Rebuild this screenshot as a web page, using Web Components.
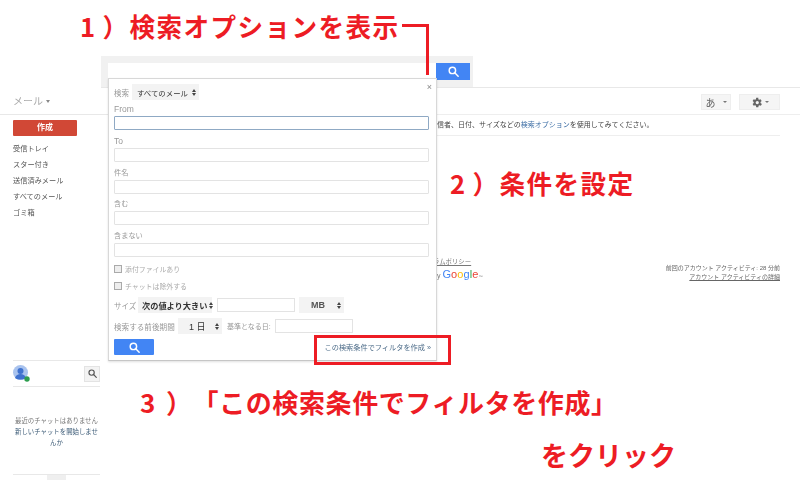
<!DOCTYPE html>
<html lang="ja">
<head>
<meta charset="utf-8">
<title>Gmail filter</title>
<style>
  html, body { margin: 0; padding: 0; background: #fff; }
  body { width: 800px; height: 480px; overflow: hidden; font-family: "Liberation Sans", "Noto Sans CJK JP", sans-serif; }
</style>
</head>
<body>
<gm-app>
  <gm-search slot="search"></gm-search>
  <gm-sidebar slot="side"></gm-sidebar>
  <gm-content slot="content"></gm-content>
  <gm-dialog slot="overlay"></gm-dialog>
  <gm-callout slot="overlay" x="80" y="8" size="25.6" num="1" gap="6" track="1.4">）検索オプションを表示</gm-callout>
  <gm-callout slot="overlay" x="450" y="165" size="25.6" num="2" gap="6" track="1.4">）条件を設定</gm-callout>
  <gm-callout slot="overlay" x="140" y="384" size="26" num="3" gap="10" track="0.6">）「この検索条件でフィルタを作成」</gm-callout>
  <gm-callout slot="overlay" x="541" y="437" size="27" track="0">をクリック</gm-callout>
  <gm-marks slot="overlay"></gm-marks>
</gm-app>

<script>
const FONT = `"Liberation Sans", "Noto Sans CJK JP", sans-serif`;
const SEARCH_ICON = `<svg width="11" height="11" viewBox="0 0 13 13" fill="none" stroke="currentColor" stroke-width="1.7"><circle cx="5.2" cy="5.2" r="3.8"/><path d="M8 8l4 4" stroke-linecap="round"/></svg>`;

class GmApp extends HTMLElement {
  constructor() {
    super();
    this.shadowDOM = this.attachShadow({ mode: "open" });
  }
  connectedCallback() {
    this.shadowDOM.innerHTML = `
    <style>
      :host { display: block; position: relative; width: 800px; height: 480px; overflow: hidden; background: #fff; font-family: ${FONT}; }
      .top { height: 56px; }
      .main { display: flex; }
      ::slotted(gm-sidebar) { flex: none; }
      ::slotted(gm-content) { flex: 1; }
    </style>
    <div class="top"></div>
    <slot name="search"></slot>
    <div class="main">
      <slot name="side"></slot>
      <slot name="content"></slot>
    </div>
    <slot name="overlay"></slot>
    `;
  }
}

class GmSearch extends HTMLElement {
  constructor() {
    super();
    this.shadowDOM = this.attachShadow({ mode: "open" });
  }
  connectedCallback() {
    this.shadowDOM.innerHTML = `
    <style>
      :host { display: block; height: 32px; margin-left: 101px; box-sizing: border-box; border-bottom: 1px solid #e8e8e8; filter: blur(.3px); }
      .band { display: flex; box-sizing: border-box; width: 372px; height: 31px; padding: 7px 3px 0 7px; background: #f1f1f1; }
      .input { width: 328px; height: 16px; background: #fff; }
      .btn { display: flex; align-items: center; justify-content: center; width: 34px; height: 17px; background: #4285f4; color: #fff; }
    </style>
    <div class="band">
      <div class="input"></div>
      <div class="btn">${SEARCH_ICON}</div>
    </div>
    `;
  }
}

class GmSidebar extends HTMLElement {
  constructor() {
    super();
    this.shadowDOM = this.attachShadow({ mode: "open" });
  }
  connectedCallback() {
    const items = ["受信トレイ", "スター付き", "送信済みメール", "すべてのメール", "ゴミ箱"];
    this.shadowDOM.innerHTML = `
    <style>
      :host { display: block; width: 108px; height: 392px; font-size: 7.2px; color: #555; filter: blur(.3px); }
      .mail { height: 27px; padding: 5px 0 0 13px; box-sizing: border-box; font-size: 10px; color: #aaa; border-bottom: 1px solid #e8e8e8; }
      .mail i { display: inline-block; border: 2px solid transparent; border-top: 3px solid #888; border-bottom: 0; margin: 0 0 2px 3px; }
      .compose { margin: 5px 0 0 13px; width: 64px; height: 16px; line-height: 16px; background: #d14836; color: #fff; font-size: 8px; font-weight: bold; text-align: center; border-radius: 1px; }
      ul { list-style: none; margin: 5px 0 0; padding: 0 0 0 13px; }
      li { height: 16px; line-height: 16px; white-space: nowrap; }
      .chat { margin: 139px 0 0 13px; width: 87px; }
      .me { display: flex; align-items: center; justify-content: space-between; height: 25px; border-top: 1px solid #e8e8e8; border-bottom: 1px solid #e8e8e8; }
      .glass { display: flex; align-items: center; justify-content: center; width: 16px; height: 16px; background: #f3f3f3; border: 1px solid #e3e3e3; box-sizing: border-box; color: #555; }
      .msg { margin-top: 28px; font-size: 6.4px; line-height: 11px; text-align: center; color: #777; white-space: nowrap; }
      .msg a { color: #3b5a76; display: block; white-space: normal; }
      .tabs { margin-top: 26px; height: 8px; display: flex; justify-content: center; gap: 1px; border-top: 1px solid #e8e8e8; }
      .tabs span { width: 19px; height: 8px; display: flex; justify-content: center; padding-top: 5px; box-sizing: border-box; }
      .tabs span:nth-child(2) { background: #efefef; }
    </style>
    <div class="mail">メール<i></i></div>
    <div class="compose">作成</div>
    <ul>${items.map((t) => `<li>${t}</li>`).join("")}</ul>
    <div class="chat">
      <div class="me">
        <svg width="17" height="17" viewBox="0 0 17 17">
          <circle cx="7.5" cy="7.5" r="7.5" fill="#a9c3ee"/>
          <circle cx="7.5" cy="6" r="3" fill="#3f72cf"/>
          <path d="M2 13c1-3 3-4 5.500-4s4.500 1 5.500 4c-3 2-8 2-11 0z" fill="#3f72cf"/>
          <circle cx="14" cy="14" r="2.700" fill="#2e9e4f"/>
        </svg>
        <div class="glass">${SEARCH_ICON.replace(/width="11" height="11"/, 'width="9" height="9"')}</div>
      </div>
      <div class="msg">最近のチャットはありません<a>新しいチャットを開始しませ んか</a></div>
      <div class="tabs">
        <span><svg width="6" height="4" viewBox="0 0 6 4"><path d="M0 4l3-3 3 3z" fill="#777"/></svg></span>
        <span><svg width="8" height="4" viewBox="0 0 8 4"><circle cx="4" cy="4" r="4" fill="#222"/></svg></span>
        <span><svg width="6" height="4" viewBox="0 0 6 4"><path d="M0 4l3-3 3 3z" fill="#777"/></svg></span>
      </div>
    </div>
    `;
  }
}

class GmContent extends HTMLElement {
  constructor() {
    super();
    this.shadowDOM = this.attachShadow({ mode: "open" });
  }
  connectedCallback() {
    this.shadowDOM.innerHTML = `
    <style>
      :host { display: block; height: 392px; font-size: 7px; color: #555; filter: blur(.3px); }
      .tools { display: flex; justify-content: flex-end; gap: 8px; height: 27px; padding: 6px 20px 0 0; box-sizing: border-box; border-bottom: 1px solid #eee; }
      .tool { display: flex; align-items: center; justify-content: center; height: 16px; background: #f5f5f5; border: 1px solid #eee; box-sizing: border-box; color: #666; }
      .ime { width: 30px; gap: 7px; font-size: 10px; }
      .gear { width: 41px; gap: 2px; color: #666; }
      i { display: inline-block; border: 2px solid transparent; border-top: 2px solid #777; border-bottom: 0; }
      .hint { margin-left: 329px; height: 21px; line-height: 20px; width: 343px; box-sizing: border-box; border-bottom: 1px solid #eee; white-space: nowrap; color: #444; }
      .hint a { color: #3d6ea5; }
      .foot { display: flex; justify-content: space-between; margin: 121px 20px 0 325px; }
      .policy { font-size: 6.4px; line-height: 9px; color: #777; text-decoration: underline; white-space: nowrap; }
      .by { display: flex; align-items: baseline; font-size: 7px; color: #777; height: 14px; margin-top: 2px; }
      .logo { font-size: 11px; margin-left: 2px; letter-spacing: .1px; }
      .by sup { font-size: 4px; line-height: 4px; }
      .activity { font-size: 6px; line-height: 9px; color: #666; text-align: right; margin-top: 7px; white-space: nowrap; }
      .activity u { display: block; }
    </style>
    <div class="tools">
      <div class="tool ime">あ<i></i></div>
      <div class="tool gear">
        <svg width="13" height="13" viewBox="0 0 24 24" fill="#666"><path d="M19.400 13a7.500 7.500 0 0 0 0-2l2.100-1.600-2-3.500-2.500 1a7.500 7.500 0 0 0-1.700-1L15.400 3.300h-4l-.4 2.600a7.500 7.500 0 0 0-1.700 1l-2.500-1-2 3.500L6.900 11a7.500 7.500 0 0 0 0 2l-2.100 1.600 2 3.500 2.500-1a7.500 7.500 0 0 0 1.700 1l.4 2.600h4l.4-2.600a7.500 7.500 0 0 0 1.700-1l2.500 1 2-3.500zM13.400 15a3 3 0 1 1 0-6 3 3 0 0 1 0 6z"/></svg>
        <i></i>
      </div>
    </div>
    <div class="hint">信者、日付、サイズなどの<a>検索オプション</a>を使用してみてください。</div>
    <div class="foot">
      <div>
        <div class="policy">ラムポリシー</div>
        <div class="by">by<span class="logo"><span style="color:#4285f4">G</span><span style="color:#ea4335">o</span><span style="color:#fbbc05">o</span><span style="color:#4285f4">g</span><span style="color:#34a853">l</span><span style="color:#ea4335">e</span></span><sup>™</sup></div>
      </div>
      <div class="activity">前回のアカウント アクティビティ: 28 分前<u>アカウント アクティビティの詳細</u></div>
    </div>
    `;
  }
}

class GmField extends HTMLElement {
  constructor() {
    super();
    this.shadowDOM = this.attachShadow({ mode: "open" });
  }
  connectedCallback() {
    const focus = this.hasAttribute("focus");
    this.shadowDOM.innerHTML = `
    <style>
      :host { display: block; font-size: 7.2px; color: #999; }
      .label { height: 16px; line-height: 18px; white-space: nowrap; }
      .box { height: 14px; box-sizing: border-box; background: #fff; border: 1px solid ${focus ? "#8fa9c4" : "#e3e3e3"}; border-radius: 1px; }
    </style>
    <div class="label"><slot></slot></div>
    <div class="box"></div>
    `;
  }
}

class GmSelect extends HTMLElement {
  constructor() {
    super();
    this.shadowDOM = this.attachShadow({ mode: "open" });
  }
  connectedCallback() {
    this.shadowDOM.innerHTML = `
    <style>
      :host { display: inline-flex; align-items: center; justify-content: space-between; flex: none; box-sizing: border-box; height: 16px; padding: 0 3px 0 4px; background: #f3f3f3; font-size: 7.4px; color: #333; white-space: nowrap; }
      svg { flex: none; margin-left: 2px; }
    </style>
    <span><slot></slot></span><svg width="4" height="7" viewBox="0 0 4 7" fill="#444"><path d="M0 3l2-3 2 3zM0 4l2 3 2-3z"/></svg>
    `;
  }
}

class GmCheck extends HTMLElement {
  constructor() {
    super();
    this.shadowDOM = this.attachShadow({ mode: "open" });
  }
  connectedCallback() {
    this.shadowDOM.innerHTML = `
    <style>
      :host { display: flex; align-items: center; gap: 3px; font-size: 6.9px; color: #aaa; height: 12px; white-space: nowrap; }
      i { width: 6px; height: 6px; border: 1px solid #aaa; background: #eee; }
    </style>
    <i></i><slot></slot>
    `;
  }
}

class GmDialog extends HTMLElement {
  constructor() {
    super();
    this.shadowDOM = this.attachShadow({ mode: "open" });
  }
  connectedCallback() {
    this.shadowDOM.innerHTML = `
    <style>
      :host { display: block; position: absolute; left: 108px; top: 78px; width: 329px; height: 283px; box-sizing: border-box; background: #fff; border: 1px solid #d8d8d8; border-bottom-color: #c6c6c6; box-shadow: 0 1px 2px rgba(0,0,0,.12); padding: 5px 7px 0 5px; font-size: 7.5px; color: #999; filter: blur(.3px); }
      .close { position: absolute; right: 4px; top: 3px; font-size: 9px; color: #888; }
      .row { display: flex; align-items: center; white-space: nowrap; }
      .scope { gap: 3px; height: 16px; }
      .fields { display: flex; flex-direction: column; gap: 1.75px; }
      .checks { display: flex; flex-direction: column; gap: 5px; margin-top: 6px; }
      .size { margin-top: 5px; height: 16px; }
      .plain { flex: none; height: 14px; box-sizing: border-box; background: #fff; border: 1px solid #e3e3e3; }
      .range { margin-top: 5px; height: 16px; }
      .bottom { display: flex; align-items: center; justify-content: space-between; margin-top: 5px; height: 16px; }
      .go { display: flex; align-items: center; justify-content: center; width: 40px; height: 16px; background: #4285f4; color: #fff; border-radius: 1px; }
      .bottom a { font-size: 7.2px; color: #4c6b88; margin-right: -2px; white-space: nowrap; }
    </style>
    <span class="close">×</span>
    <div class="row scope">検索<gm-select style="width:67px;padding-left:5px">すべてのメール</gm-select></div>
    <div class="fields">
      <gm-field focus style="font-size:8.5px">From</gm-field>
      <gm-field style="font-size:8.5px">To</gm-field>
      <gm-field>件名</gm-field>
      <gm-field>含む</gm-field>
      <gm-field>含まない</gm-field>
    </div>
    <div class="checks">
      <gm-check>添付ファイルあり</gm-check>
      <gm-check>チャットは除外する</gm-check>
    </div>
    <div class="row size"><span style="width:24px">サイズ</span>
      <gm-select style="width:74px;font-size:8.2px;font-weight:bold">次の値より大きい</gm-select>
      <div class="plain" style="width:78px;margin-left:5px"></div>
      <gm-select style="width:45px;margin-left:4px;padding-left:12px;font-size:9px;font-weight:bold;color:#555">MB</gm-select>
    </div>
    <div class="row range"><span style="width:64px;font-size:7.6px">検索する前後期間</span>
      <gm-select style="width:44px;padding-left:11px;font-size:9px">1 日</gm-select>
      <span style="margin-left:5px;width:48px;font-size:7px">基準となる日:</span>
      <div class="plain" style="width:78px"></div>
    </div>
    <div class="bottom">
      <div class="go">${SEARCH_ICON}</div>
      <a>この検索条件でフィルタを作成 »</a>
    </div>
    `;
  }
}

class GmCallout extends HTMLElement {
  constructor() {
    super();
    this.shadowDOM = this.attachShadow({ mode: "open" });
  }
  connectedCallback() {
    const x = this.getAttribute("x");
    const y = this.getAttribute("y");
    const size = this.getAttribute("size");
    const track = this.getAttribute("track");
    const num = this.getAttribute("num");
    const gap = this.getAttribute("gap") || 0;
    this.shadowDOM.innerHTML = `
    <style>
      :host { display: block; position: absolute; left: ${x}px; top: ${y}px; font-family: "Noto Sans CJK JP", sans-serif; font-weight: bold; font-size: ${size}px; line-height: 36px; letter-spacing: ${track}px; text-spacing-trim: space-all; color: #ed1c24; white-space: nowrap; }
      span { margin-right: ${gap}px; }
    </style>
    ${num ? `<span>${num}</span>` : ""}<slot></slot>
    `;
  }
}

class GmMarks extends HTMLElement {
  constructor() {
    super();
    this.shadowDOM = this.attachShadow({ mode: "open" });
  }
  connectedCallback() {
    this.shadowDOM.innerHTML = `
    <style>
      :host { position: absolute; inset: 0; display: block; pointer-events: none; }
      svg { display: block; }
    </style>
    <svg width="800" height="480" fill="none" stroke="#ed1c24" stroke-width="3">
      <path d="M402 25.500H427.500V75"/>
      <rect x="315.500" y="336.500" width="134" height="27"/>
    </svg>
    `;
  }
}

customElements.define("gm-app", GmApp);
customElements.define("gm-search", GmSearch);
customElements.define("gm-sidebar", GmSidebar);
customElements.define("gm-content", GmContent);
customElements.define("gm-field", GmField);
customElements.define("gm-select", GmSelect);
customElements.define("gm-check", GmCheck);
customElements.define("gm-dialog", GmDialog);
customElements.define("gm-callout", GmCallout);
customElements.define("gm-marks", GmMarks);
</script>
</body>
</html>
